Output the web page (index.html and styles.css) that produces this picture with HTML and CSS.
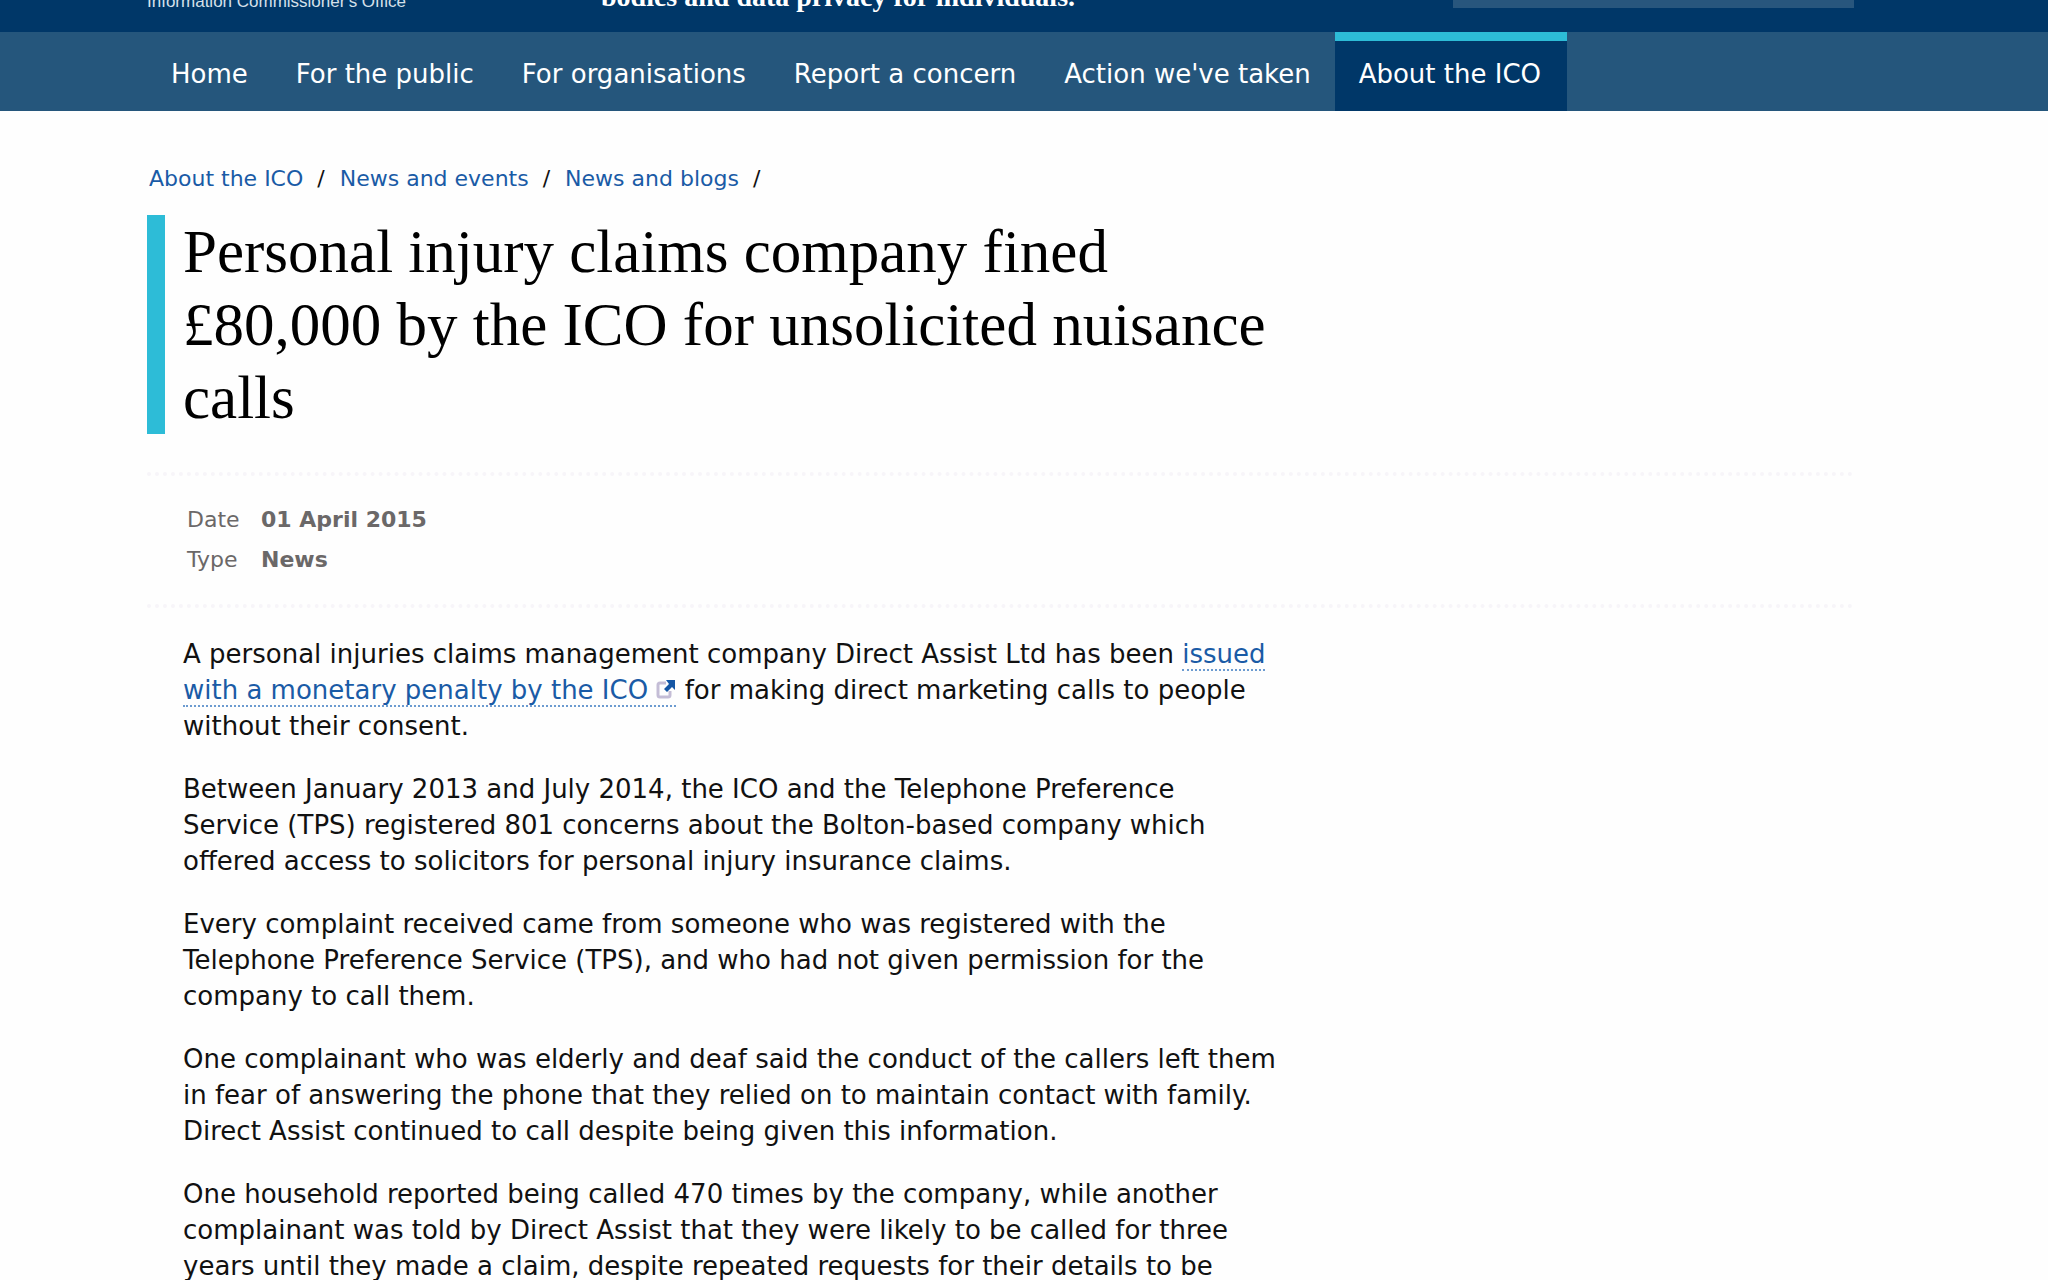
FILE: index.html
```html
<!DOCTYPE html>
<html lang="en">
<head>
  <meta charset="UTF-8">
  <meta name="viewport" content="width=device-width, initial-scale=1.0">
  <title>Personal injury claims company fined £80,000 by the ICO for unsolicited nuisance calls</title>
  <link rel="stylesheet" href="styles.css">
</head>
<body>
  <header class="site-header">
    <div class="wrap header-row">
      <div class="logo-text">Information Commissioner's Office</div>
      <p class="tagline">bodies and data privacy for individuals.</p>
      <input class="search" type="search" aria-label="Search">
    </div>
  </header>
  <nav class="main-nav" aria-label="Main">
    <ul class="wrap nav-list">
      <li><a href="#">Home</a></li>
      <li><a href="#">For the public</a></li>
      <li><a href="#">For organisations</a></li>
      <li><a href="#">Report a concern</a></li>
      <li><a href="#">Action we've taken</a></li>
      <li><a class="active" href="#">About the ICO</a></li>
    </ul>
  </nav>

  <main class="wrap">
    <ul class="breadcrumb">
      <li><a href="#">About the ICO</a></li>
      <li><a href="#">News and events</a></li>
      <li><a href="#">News and blogs</a></li>
    </ul>
    <h1>Personal injury claims company fined<br>£80,000 by the ICO for unsolicited nuisance<br>calls</h1>

    <dl class="meta">
      <dt>Date</dt>
      <dd>01 April 2015</dd>
      <dt>Type</dt>
      <dd>News</dd>
    </dl>

    <article class="article">
      <p>A personal injuries claims management company Direct Assist Ltd has been <a href="#">issued<br>with a monetary penalty by the ICO <svg class="external" viewBox="0 0 20 20" aria-hidden="true"><path class="box" d="M10 4H4Q2 4 2 6V16Q2 18 4 18H12Q14 18 14 16V12"/><path class="arrow" d="M10 1H19V11L16 8L11 13L8 10L13 5Z"/></svg></a> for making direct marketing calls to people<br>without their consent.</p>
      <p>Between January 2013 and July 2014, the ICO and the Telephone Preference<br>Service (TPS) registered 801 concerns about the Bolton-based company which<br>offered access to solicitors for personal injury insurance claims.</p>
      <p>Every complaint received came from someone who was registered with the<br>Telephone Preference Service (TPS), and who had not given permission for the<br>company to call them.</p>
      <p>One complainant who was elderly and deaf said the conduct of the callers left them<br>in fear of answering the phone that they relied on to maintain contact with family.<br>Direct Assist continued to call despite being given this information.</p>
      <p>One household reported being called 470 times by the company, while another<br>complainant was told by Direct Assist that they were likely to be called for three<br>years until they made a claim, despite repeated requests for their details to be</p>
    </article>
  </main>
</body>
</html>
```
FILE: styles.css
```css
* {
  box-sizing: border-box;
}
body {
  margin: 0;
  background: #fefefe;
  color: #111;
  font-family: Verdana, "DejaVu Sans", sans-serif;
  font-size: 26px;
  line-height: 36px;
}
a {
  color: #1a5ba6;
  text-decoration: none;
}
.wrap {
  padding: 0 194px 0 147px;
}

/* header */
.site-header {
  height: 32px;
  overflow: hidden;
  background: #003768;
  color: #fff;
}
.header-row {
  display: flex;
  align-items: flex-end;
  height: 12px;
}
.logo-text {
  width: 424px;
  color: #d5e0ea;
  font-family: "Liberation Sans", Arial, sans-serif;
  font-size: 17px;
  line-height: 20px;
}
.tagline {
  margin: 0;
  padding-left: 30px;
  font-family: Georgia, "Liberation Serif", serif;
  font-size: 28px;
  font-weight: bold;
  line-height: 30px;
}
.search {
  width: 401px;
  height: 44px;
  margin: 0 0 4px auto;
  border: 0;
  background: #28567d;
}

/* main navigation */
.main-nav {
  background: #25567c;
}
.nav-list {
  display: flex;
  margin: 0;
  list-style: none;
}
.nav-list a {
  display: block;
  padding: 15px 24px 19px;
  border-top: 9px solid transparent;
  color: #fff;
}
.nav-list .active {
  padding-right: 26px;
  border-top-color: #2dbcd7;
  background: #003768;
}

/* breadcrumb and title */
.breadcrumb {
  display: flex;
  margin: 0;
  padding: 50px 0 18px 2px;
  list-style: none;
  font-size: 22px;
}
.breadcrumb li::after {
  content: "/";
  padding: 0 15px 0 14px;
}
h1 {
  margin: 0;
  padding-left: 18px;
  border-left: 18px solid #2dbcd7;
  color: #000;
  font-family: Georgia, "Liberation Serif", serif;
  font-size: 61px;
  font-weight: normal;
  line-height: 73px;
}

/* date and type */
.meta {
  display: grid;
  grid-template-columns: 74px 1fr;
  margin: 38px 0 28px;
  padding: 24px 40px;
  border-top: 4px dotted #f7f5f9;
  border-bottom: 4px dotted #f7f5f9;
  color: #6b6868;
  font-size: 22px;
  line-height: 40px;
}
.meta dd {
  margin: 0;
  font-weight: bold;
}

/* article text */
.article {
  padding-left: 36px;
}
.article p {
  margin: 0 0 27px;
}
.article a {
  border-bottom: 2px dotted #6c9bd0;
}
.external {
  width: 20px;
  height: 20px;
}
.box {
  fill: none;
  stroke: #c4bdd6;
  stroke-width: 3;
}
.arrow {
  fill: #1557a5;
}
```
